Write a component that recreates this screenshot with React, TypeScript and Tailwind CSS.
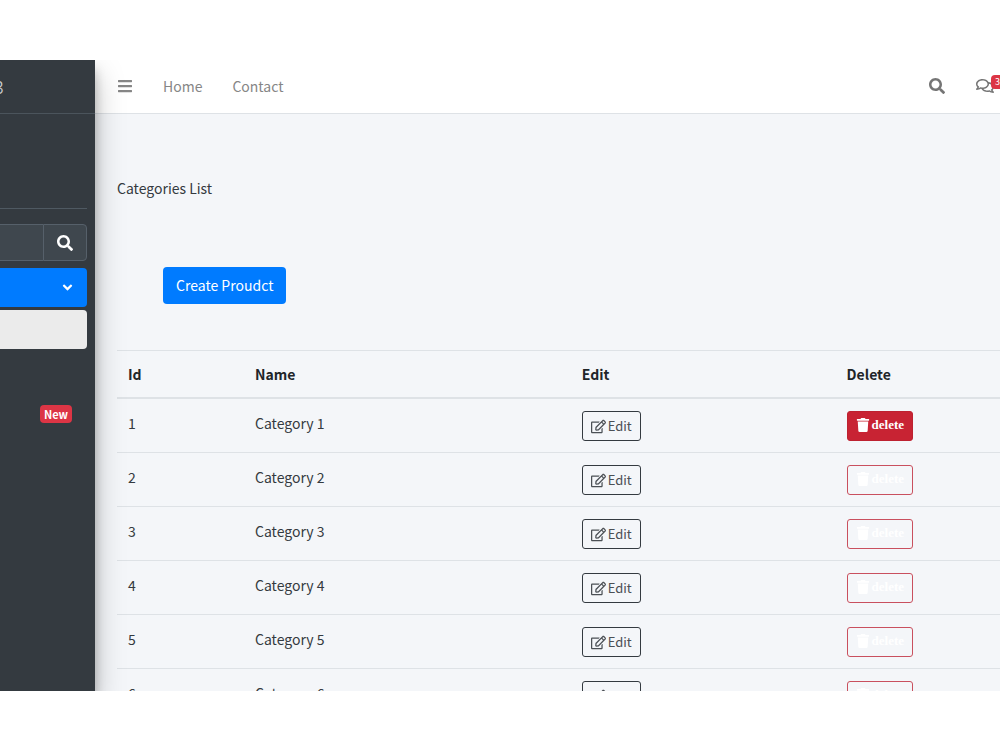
import React, { useState } from 'react';
import { FaAngleDown, FaBars, FaRegComments, FaRegEdit, FaSearch, FaTrash } from 'react-icons/fa';

const categories = [
  { id: 1, name: 'Category 1' },
  { id: 2, name: 'Category 2' },
  { id: 3, name: 'Category 3' },
  { id: 4, name: 'Category 4' },
  { id: 5, name: 'Category 5' },
  { id: 6, name: 'Category 6' },
];

function Sidebar() {
  const [search, setSearch] = useState('');

  return (
    <aside className="relative z-20 w-[95px] shrink-0 bg-[#343a40] shadow-[0_14px_28px_rgba(0,0,0,0.25),0_10px_10px_rgba(0,0,0,0.22)]">
      <a href="#" className="flex h-[54px] items-center border-b border-[#4b545c] pb-0.5 text-lg font-light text-white/80">
        <span className="-ml-1.5">3</span>
      </a>

      <div className="mr-2">
        {/* User panel */}
        <div className="h-[95px] border-b border-[#4f5962]" />

        <form className="mt-[15px] flex h-[37px]" onSubmit={(e) => e.preventDefault()}>
          <input
            type="text"
            aria-label="Search"
            className="min-w-0 flex-1 border-y border-[#56606a] bg-[#3f474e] px-2 text-sm text-white outline-none"
            value={search}
            onChange={(e) => setSearch(e.target.value)}
          />
          <button
            type="submit"
            aria-label="Search"
            className="flex w-11 items-center justify-center rounded-r border border-[#56606a] bg-[#3f474e] text-white"
          >
            <FaSearch size={16} />
          </button>
        </form>

        <nav className="mt-[7px] flex flex-col gap-[3px]">
          <a href="#" aria-label="Dashboard" className="flex h-[39px] items-center justify-end rounded-r bg-[#007bff] pr-3 text-white">
            <FaAngleDown size={15} />
          </a>
          <a href="#" aria-label="Categories" className="h-[39px] rounded-r bg-[#ebebeb]" />
          <div className="h-[39px]" />
          <a href="#" className="flex h-[39px] items-center justify-end pr-[15px]">
            <span className="rounded bg-[#dc3545] px-1 text-[11px] leading-[18px] font-bold text-white">New</span>
          </a>
        </nav>
      </div>
    </aside>
  );
}

function Navbar() {
  return (
    <header className="flex h-[54px] items-center border-b border-[#dee2e6] bg-white pb-0.5 pl-[22px] text-sm text-[#868686]">
      <button type="button" aria-label="Menu" className="mr-[30px]">
        <FaBars size={16} />
      </button>
      <nav className="flex gap-[30px]">
        <a href="#">Home</a>
        <a href="#">Contact</a>
      </nav>
      <div className="ml-auto flex items-center gap-[31px]">
        <button type="button" aria-label="Search" className="text-[#757575]">
          <FaSearch size={16} />
        </button>
        <a href="#" aria-label="Messages" className="relative flex w-6 text-[#757575]">
          <FaRegComments size={18} className="shrink-0" />
          <span className="absolute -top-0.5 left-[15px] rounded bg-[#dc3545] px-1 text-[9px] leading-[14px] text-white">3</span>
        </a>
      </div>
    </header>
  );
}

export default function App() {
  // Row whose delete button is filled in
  const [activeId, setActiveId] = useState(1);

  return (
    <div className="h-screen overflow-hidden bg-white pt-[60px] pb-[59px] font-['Noto_Sans_CJK_SC',sans-serif] text-sm leading-6 text-[#212529]">
      <div className="flex h-full overflow-hidden">
        <Sidebar />

        <div className="min-w-0 flex-1 bg-[#f4f6f9]">
          <Navbar />

          <main className="pl-[22px]">
            <h1 className="pt-[62px] text-[#343a40]">Categories List</h1>

            <div className="mt-[67px] mb-[46px] ml-[46px] flex">
              <button type="button" className="h-[37px] rounded bg-[#007bff] px-[13px] pb-0.5 text-white">
                Create Proudct
              </button>
            </div>

            <table className="w-full table-fixed border-separate border-spacing-0 text-left [&_td]:border-b [&_td]:border-[#dee2e6] [&_td]:px-[11px] [&_td]:pt-3 [&_th]:border-t [&_th]:border-b-2 [&_th]:border-[#dee2e6] [&_th]:px-[11px] [&_th]:font-bold">
              <thead>
                <tr className="h-[49px]">
                  <th className="w-[127px]">Id</th>
                  <th className="w-[37%]">Name</th>
                  <th className="w-[30%]">Edit</th>
                  <th>Delete</th>
                </tr>
              </thead>
              <tbody>
                {categories.map((category) => (
                  <tr key={category.id} className="h-[54px] align-top text-[#343a40]">
                    <td>{category.id}</td>
                    <td>{category.name}</td>
                    <td>
                      <button
                        type="button"
                        className="flex h-[30px] items-center gap-0.5 rounded-[3px] border border-[#343a40] px-2 text-[13px] text-[#4b5055]"
                      >
                        <FaRegEdit size={15} />
                        Edit
                      </button>
                    </td>
                    <td>
                      <button
                        type="button"
                        onClick={() => setActiveId(category.id)}
                        className={`flex h-[30px] items-center gap-0.5 rounded-[3px] border px-2 pb-0.5 font-['Liberation_Serif',serif] text-[13px] font-bold text-white ${
                          category.id === activeId ? 'border-[#bd2130] bg-[#c82333]' : 'border-[#c9505e]'
                        }`}
                      >
                        <FaTrash size={14} />
                        delete
                      </button>
                    </td>
                  </tr>
                ))}
              </tbody>
            </table>
          </main>
        </div>
      </div>
    </div>
  );
}
